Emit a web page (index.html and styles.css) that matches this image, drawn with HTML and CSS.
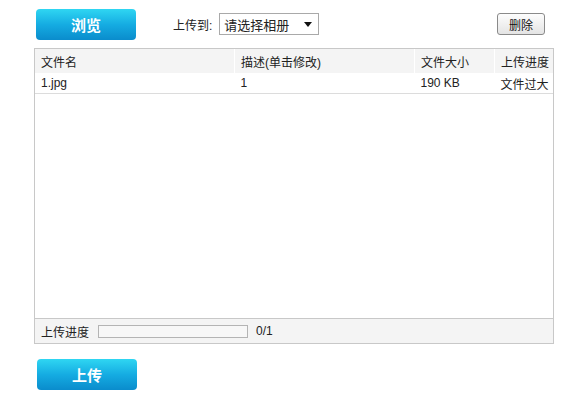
FILE: index.html
```html
<!DOCTYPE html>
<html>
    <head>
        <meta charset="utf-8">
        <title>上传照片</title>
        <link rel="stylesheet" href="styles.css">
    </head>
    <body>
        <div class="toolbar">
            <button class="big-btn">浏览</button>
            <span class="album-label">上传到:</span>
            <div class="album-select">
                <span>请选择相册</span>
                <span class="arrow"></span>
            </div>
            <button class="del-btn">删除</button>
        </div>
        <div class="file-box">
            <table class="file-list">
                <tr class="head">
                    <td class="col-name">文件名</td>
                    <td class="col-desc">描述(单击修改)</td>
                    <td class="col-size">文件大小</td>
                    <td class="col-prog">上传进度</td>
                </tr>
                <tr class="row">
                    <td>1.jpg</td>
                    <td>1</td>
                    <td>190 KB</td>
                    <td>文件过大</td>
                </tr>
            </table>
            <div class="list-space"></div>
            <div class="total">
                <span>上传进度</span>
                <div class="bar"></div>
                <span>0/1</span>
            </div>
        </div>
        <div class="bottom">
            <button class="big-btn">上传</button>
        </div>
    </body>
</html>
```

FILE: styles.css
```css
body {
    margin: 0;
    font-family: "Liberation Sans", "Noto Sans CJK SC", sans-serif;
    font-size: 12px;
    color: #222;
    background: #fff;
}
.toolbar {
    display: flex;
    align-items: center;
    height: 48px;
    padding-left: 36px;
    width: 509px;
}
.big-btn {
    width: 100px;
    height: 31px;
    border: 0;
    border-radius: 4px;
    background: linear-gradient(#2fd6f2, #15ace2 50%, #0a8ccc);
    color: #fff;
    font-family: "Noto Sans CJK SC", sans-serif;
    font-size: 15px;
    font-weight: bold;
    padding: 0;
}
.album-label {
    margin-left: 37px;
    font-size: 12px;
}
.album-select {
    display: flex;
    align-items: center;
    justify-content: space-between;
    box-sizing: border-box;
    width: 100px;
    height: 22px;
    margin-left: 7px;
    border: 1px solid #a9a9a9;
    padding: 0 6px 0 4px;
    font-size: 13px;
}
.arrow {
    width: 0;
    height: 0;
    border-left: 4px solid transparent;
    border-right: 4px solid transparent;
    border-top: 5px solid #111;
}
.del-btn {
    margin-left: auto;
    width: 48px;
    height: 22px;
    border: 1px solid #8a8a8a;
    border-radius: 3px;
    background: linear-gradient(#fdfdfd, #e4e4e4);
    font-family: "Noto Sans CJK SC", sans-serif;
    font-size: 12px;
    padding: 0;
    color: #111;
}
.file-box {
    margin-left: 34px;
    width: 518px;
    height: 294px;
    border: 1px solid #c8c8c8;
    display: flex;
    flex-direction: column;
}
.file-list {
    width: 100%;
    border-collapse: collapse;
}
.file-list td {
    padding: 0 0 0 6px;
    white-space: nowrap;
}
.head td {
    background: #f4f4f4;
    height: 24px;
    border-left: 1px solid #fff;
}
.head td:first-child {
    border-left: 0;
}
.row td {
    height: 20px;
    border-bottom: 1px solid #dcdcdc;
}
.col-name { width: 193px; }
.col-desc { width: 173px; }
.col-size { width: 73px; }
.list-space {
    flex: 1;
}
.total {
    display: flex;
    align-items: center;
    height: 24px;
    background: #f4f4f4;
    border-top: 1px solid #c8c8c8;
    padding-left: 6px;
}
.bar {
    width: 148px;
    height: 11px;
    border: 1px solid #b4b4b4;
    background: #f7f7f7;
    margin: 0 8px 0 9px;
}
.bottom {
    padding: 15px 0 0 37px;
}
```
